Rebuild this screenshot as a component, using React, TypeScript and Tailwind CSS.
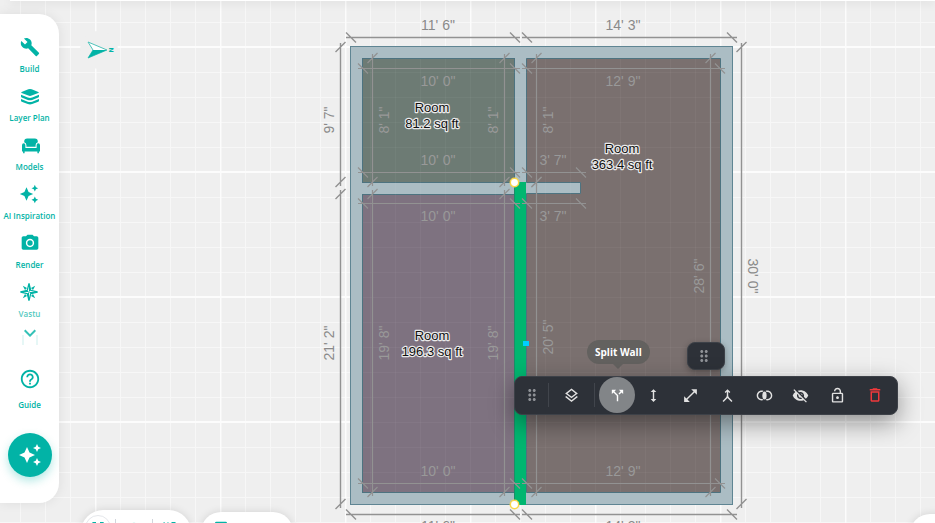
import React from 'react';
import type { IconType } from 'react-icons';
import {
  MdAutoAwesome,
  MdBuild,
  MdCallSplit,
  MdCropFree,
  MdDragIndicator,
  MdExpandMore,
  MdHeight,
  MdHelpOutline,
  MdJoinInner,
  MdMerge,
  MdOpenInFull,
  MdOutlineDelete,
  MdOutlineLayers,
  MdOutlineLock,
  MdOutlineLockOpen,
  MdPhotoCamera,
  MdSyncDisabled,
  MdVisibilityOff,
  MdWebAsset,
} from 'react-icons/md';

interface IconProps {
  className?: string;
}

const LayerPlanIcon: React.FC<IconProps> = ({ className }) => (
  <svg viewBox="0 -1 20 20" className={className} fill="currentColor" aria-hidden="true">
    <path d="M8.3 2.300 Q10 1.700 11.700 2.300 L18.300 4.900 Q19.500 5.500 18.300 6.100 L11.700 8.600 Q10 9.200 8.300 8.600 L1.700 6.100 Q.5 5.500 1.700 4.900 Z" />
    <path d="M1 7.800 L7.800 10.500 Q10 11.300 12.200 10.500 L19 7.800 V9.600 Q19 10.200 18.300 10.500 L12.200 12.900 Q10 13.700 7.800 12.900 L1.700 10.500 Q1 10.200 1 9.600 Z" />
    <path d="M1 12 L7.800 14.700 Q10 15.500 12.200 14.700 L19 12 V13.800 Q19 14.400 18.300 14.700 L12.200 17.100 Q10 17.900 7.800 17.100 L1.700 14.700 Q1 14.400 1 13.800 Z" />
  </svg>
);

const SofaIcon: React.FC<IconProps> = ({ className }) => (
  <svg viewBox="-1 -1 20 20" className={className} fill="currentColor" aria-hidden="true">
    <path d="M3.200 5.800 Q3.200 2.500 6.200 2.500 H13.800 Q16.800 2.500 16.800 5.800 V6.300 Q14.600 6.800 14.600 9 V10.800 H5.400 V9 Q5.400 6.800 3.200 6.300 Z" />
    <path d="M1 9.300 Q1 7.200 2.700 7.200 Q4.400 7.200 4.400 9.300 V11.900 H15.600 V9.300 Q15.600 7.200 17.300 7.200 Q19 7.200 19 9.300 V15.600 H17.900 V17.300 H16.400 V15.600 H3.600 V17.300 H2.100 V15.600 H1 Z" />
  </svg>
);

const CompassIcon: React.FC<IconProps> = ({ className }) => (
  <svg viewBox="0 0 20 20" className={className} aria-hidden="true">
    <path
      d="M10 1.500 L11.700 8.300 L18.500 10 L11.700 11.700 L10 18.500 L8.300 11.700 L1.500 10 L8.300 8.300 Z"
      fill="none"
      stroke="currentColor"
      strokeWidth="1.300"
    />
    <path d="M10 1 V10 L11.800 8.200 Z M10 19 V10 L8.200 11.800 Z M1 10 H10 L8.200 8.200 Z M19 10 H10 L11.800 11.800 Z" fill="currentColor" />
    <path d="M3.800 3.800 L8 6 L6 8 Z M16.200 3.800 L14 8 L12 6 Z M3.800 16.200 L6 12 L8 14 Z M16.200 16.200 L12 14 L14 12 Z" fill="currentColor" />
  </svg>
);

interface NavItem {
  label: string;
  Icon: IconType | React.FC<IconProps>;
  faded?: boolean;
}

const navItems: NavItem[] = [
  { label: 'Build', Icon: MdBuild },
  { label: 'Layer Plan', Icon: LayerPlanIcon },
  { label: 'Models', Icon: SofaIcon },
  { label: 'AI Inspiration', Icon: MdAutoAwesome },
  { label: 'Render', Icon: MdPhotoCamera },
  { label: 'Vastu', Icon: CompassIcon, faded: true },
];

const Sidebar = () => (
  <nav className="relative z-10 mt-3.5 mb-5 flex w-[59px] shrink-0 flex-col items-center rounded-r-[20px] bg-white pt-[23px] text-[#02b3a6] shadow-[0_0_12px_rgba(0,0,0,0.08)]">
    {navItems.map(({ label, Icon, faded }) => (
      <button key={label} type="button" className="flex h-[49px] shrink-0 flex-col items-center gap-1.5">
        <Icon className="size-5 shrink-0" />
        <span className={`text-[8px] leading-3 font-semibold whitespace-nowrap ${faded ? 'opacity-70' : ''}`}>{label}</span>
      </button>
    ))}
    <button type="button" aria-label="More tools" className="relative -mt-1 flex h-5 w-6 shrink-0 items-start justify-center">
      <span className="absolute top-2 h-2.5 w-4 border-x-2 border-[#e6f7f6]" />
      <MdExpandMore className="relative -mt-1.5 size-6 shrink-0 opacity-80" stroke="currentColor" />
    </button>
    <button type="button" className="mt-[21px] flex flex-col items-center gap-[9px]">
      <MdHelpOutline className="size-[22px]" />
      <span className="text-[8px] leading-3 font-semibold">Guide</span>
    </button>
    <button
      type="button"
      aria-label="AI assistant"
      className="mt-[22px] flex size-11 shrink-0 items-center justify-center rounded-full bg-[#02b3a6] text-white shadow-[0_4px_10px_rgba(2,179,166,0.3)]"
    >
      <MdAutoAwesome className="size-6" />
    </button>
  </nav>
);

interface Dim {
  at: number;
  from: number;
  to: number;
  outside?: boolean;
}

// dimension lines that run left to right: at = y
const acrossDims: Dim[] = [
  { at: 37, from: 350, to: 515, outside: true },
  { at: 37, from: 526, to: 732, outside: true },
  { at: 68, from: 362, to: 515 },
  { at: 68, from: 526, to: 720 },
  { at: 172, from: 362, to: 515 },
  { at: 172, from: 526, to: 581 },
  { at: 203, from: 362, to: 515 },
  { at: 203, from: 526, to: 581 },
  { at: 483, from: 362, to: 515 },
  { at: 483, from: 526, to: 720 },
  { at: 514, from: 350, to: 515, outside: true },
  { at: 514, from: 526, to: 732, outside: true },
];

// dimension lines that run top to bottom: at = x
const downDims: Dim[] = [
  { at: 340, from: 47, to: 182, outside: true },
  { at: 340, from: 194, to: 504, outside: true },
  { at: 372, from: 58, to: 182 },
  { at: 372, from: 194, to: 492 },
  { at: 504, from: 58, to: 182 },
  { at: 504, from: 194, to: 492 },
  { at: 536, from: 58, to: 182 },
  { at: 536, from: 182, to: 492 },
  { at: 710, from: 58, to: 492 },
  { at: 741, from: 47, to: 504, outside: true },
];

interface PlanLabel {
  x: number;
  y: number;
  text: string;
  turn?: number;
  outside?: boolean;
}

const planLabels: PlanLabel[] = [
  { x: 438, y: 25, text: '11\' 6"', outside: true },
  { x: 623, y: 25, text: '14\' 3"', outside: true },
  { x: 438, y: 526, text: '11\' 6"', outside: true },
  { x: 623, y: 526, text: '14\' 3"', outside: true },
  { x: 329, y: 120, text: '9\' 7"', turn: -90, outside: true },
  { x: 329, y: 343, text: '21\' 2"', turn: -90, outside: true },
  { x: 753, y: 276, text: '30\' 0"', turn: 90, outside: true },
  { x: 438, y: 81, text: '10\' 0"' },
  { x: 438, y: 160, text: '10\' 0"' },
  { x: 438, y: 216, text: '10\' 0"' },
  { x: 438, y: 471, text: '10\' 0"' },
  { x: 623, y: 81, text: '12\' 9"' },
  { x: 623, y: 471, text: '12\' 9"' },
  { x: 553, y: 160, text: '3\' 7"' },
  { x: 553, y: 216, text: '3\' 7"' },
  { x: 384, y: 120, text: '8\' 1"', turn: -90 },
  { x: 493, y: 120, text: '8\' 1"', turn: -90 },
  { x: 548, y: 120, text: '8\' 1"', turn: -90 },
  { x: 384, y: 343, text: '19\' 8"', turn: -90 },
  { x: 493, y: 343, text: '19\' 8"', turn: -90 },
  { x: 548, y: 337, text: '20\' 5"', turn: -90 },
  { x: 699, y: 276, text: '28\' 6"', turn: -90 },
];

const rooms = [
  { x: 432, y: 107, area: '81.2 sq ft' },
  { x: 622, y: 148, area: '363.4 sq ft' },
  { x: 432, y: 335, area: '196.3 sq ft' },
];

const FloorPlan = () => (
  <svg className="absolute inset-0 h-full w-full" fontFamily="'Liberation Sans', Arial, sans-serif" aria-label="Floor plan">
    <defs>
      <pattern id="minor" x="95" y="47" width="25" height="25" patternUnits="userSpaceOnUse">
        <path d="M.5 0 V25 M0 .5 H25" stroke="#f7f7f7" />
      </pattern>
      <pattern id="major" x="95" y="46" width="125" height="125" patternUnits="userSpaceOnUse">
        <path d="M.5 0 V125 M0 1 H125" stroke="#fcfcfc" strokeWidth="2" />
      </pattern>
    </defs>
    <rect width="100%" height="100%" fill="#efefef" />
    <rect width="100%" height="100%" fill="url(#minor)" />
    <rect width="100%" height="100%" fill="url(#major)" />

    {/* compass pointing north */}
    <circle cx="99" cy="50" r="19" fill="#efefef" />
    <path d="M88 42 L107 50 L88 58 L93 50 Z" fill="#ffffff" stroke="#4fc4bb" />
    <path d="M93 50 H107 L88 58 Z" fill="#02b3a6" />
    <text x="111" y="50" fontSize="6" fontWeight="700" fontFamily="'DejaVu Sans', sans-serif" fill="#02b3a6" textAnchor="middle" dominantBaseline="central" transform="rotate(90 111 50)">N</text>

    {/* walls and rooms */}
    <rect x="350.5" y="46.5" width="382" height="458" fill="#abbdc4" stroke="#5f8593" />
    <g stroke="#4d7380">
      <rect x="362.5" y="58.5" width="152" height="124" fill="#6d7b74" />
      <rect x="362.5" y="194.5" width="152" height="298" fill="#7e7280" />
      <path d="M526.5 58.500 H720.500 V492.500 H526.500 V193.500 H580.500 V182.500 H526.500 Z" fill="#7a706f" />
    </g>
    <path
      d="M370.500 59 V492 M395.500 59 V492 M420.500 59 V492 M445.500 59 V492 M470.500 59 V492 M495.500 59 V492 M545.500 59 V492 M570.500 59 V492 M595.500 59 V492 M620.500 59 V492 M645.500 59 V492 M670.500 59 V492 M695.500 59 V492 M363 72.500 H720 M363 97.500 H720 M363 122.500 H720 M363 147.500 H720 M363 222.500 H720 M363 247.500 H720 M363 272.500 H720 M363 297.500 H720 M363 322.500 H720 M363 347.500 H720 M363 372.500 H720 M363 397.500 H720 M363 422.500 H720 M363 447.500 H720 M363 472.500 H720"
      stroke="#ffffff"
      strokeOpacity="0.04"
    />
    {/* selected wall */}
    <rect x="514" y="182" width="12" height="323" fill="#00b670" />
    <path d="M514.500 182 V504" stroke="#1a8d68" />

    <g stroke="#929292" fill="none">
      {acrossDims.map(({ at, from, to, outside }) => (
        <path
          key={`${at}-${from}`}
          strokeWidth={outside ? 1.4 : 1.2}
          d={`M${from - 4} ${at + 0.5} H${to + 5} M${from - 4} ${at - 4.5} l10 10 M${to - 5} ${at - 4.5} l10 10`}
        />
      ))}
      {downDims.map(({ at, from, to, outside }) => (
        <path
          key={`${at}-${from}`}
          strokeWidth={outside ? 1.4 : 1.2}
          d={`M${at + 0.5} ${from - 4} V${to + 4} M${at - 4.5} ${from + 5} l10 -10 M${at - 4.5} ${to + 5} l10 -10`}
        />
      ))}
    </g>

    <g fontSize="14" textAnchor="middle">
      {planLabels.map(({ x, y, text, turn = 0, outside }) => (
        <text
          key={`${x}-${y}`}
          x={x}
          y={y}
          dominantBaseline="central"
          fill={outside ? '#8a8a8a' : '#999999'}
          transform={`rotate(${turn} ${x} ${y})`}
        >
          {text}
        </text>
      ))}
    </g>

    <g fontSize="13" textAnchor="middle" fill="#111111" stroke="#e9e9e9" strokeWidth="2.400" strokeLinejoin="round" paintOrder="stroke">
      {rooms.map(({ x, y, area }) => (
        <text key={area} x={x} y={y} dominantBaseline="central">
          <tspan x={x}>Room</tspan>
          <tspan x={x} dy="16">{area}</tspan>
        </text>
      ))}
    </g>

    <g fill="#ffffff" stroke="#f9d648" strokeWidth="1.500">
      <circle cx="514.500" cy="182.500" r="4.200" />
      <circle cx="514.500" cy="504.500" r="4.200" />
    </g>
    <rect x="523" y="341" width="6" height="5" fill="#00cfff" />
  </svg>
);

const wallActions = [
  { label: 'Resize height', Icon: MdHeight },
  { label: 'Stretch wall', Icon: MdOpenInFull },
  { label: 'Merge walls', Icon: MdMerge },
  { label: 'Join walls', Icon: MdJoinInner },
  { label: 'Hide wall', Icon: MdVisibilityOff },
  { label: 'Lock wall', Icon: MdOutlineLockOpen },
];

const WallToolbar = () => (
  <div
    role="toolbar"
    aria-label="Wall"
    className="absolute top-[376px] left-[514px] flex h-[39px] w-96 items-center rounded-lg border border-[#3d4148] bg-[#2d3138] pr-1 pb-px text-[#e2e2e2] shadow-[0_8px_24px_rgba(0,0,0,0.4)]"
  >
    <button type="button" aria-label="Move toolbar" className="flex h-6 w-[34px] items-center justify-center border-r border-[#41454c] text-[#8f9297]">
      <MdDragIndicator className="size-[18px]" />
    </button>
    <button type="button" aria-label="Wall layers" className="flex h-6 w-[46px] items-center justify-center border-r border-[#41454c]">
      <MdOutlineLayers className="size-[17px]" />
    </button>
    <button type="button" aria-label="Split Wall" className="ml-1 flex size-9 items-center justify-center rounded-full bg-[#828588] text-white">
      <MdCallSplit className="size-[17px]" />
    </button>
    <div className="flex flex-1">
      {wallActions.map(({ label, Icon }) => (
        <button key={label} type="button" aria-label={label} className="flex h-9 flex-1 items-center justify-center">
          <Icon className="size-[17px]" />
        </button>
      ))}
      <button type="button" aria-label="Delete wall" className="flex h-9 flex-1 items-center justify-center text-[#f0393b]">
        <MdOutlineDelete className="size-[18px]" />
      </button>
    </div>
  </div>
);

const App: React.FC = () => (
  <div className="relative flex h-screen overflow-hidden bg-[#efefef] font-['Open_Sans','Noto_Sans',sans-serif]">
    <FloorPlan />
    <header className="absolute top-0 right-0 left-2.5 h-px bg-white shadow-[0_1px_8px_rgba(0,0,0,0.35)]" />
    <Sidebar />

    <div role="tooltip" className="absolute top-[340px] left-[587px] rounded-full bg-[#63615f] px-2 py-1 text-[10px] leading-4 font-bold whitespace-nowrap text-white">
      Split Wall
      <svg viewBox="0 0 10 5" className="absolute top-full left-1/2 -ml-[5px] h-[5px] w-2.5" aria-hidden="true">
        <path d="M0 0 H10 L5 5 Z" fill="#63615f" />
      </svg>
    </div>
    <button
      type="button"
      aria-label="Move panel"
      className="absolute top-[342px] left-[687px] flex h-7 w-[38px] items-center justify-center rounded-lg border border-[#3d4148] bg-[#2d3138] pr-1 text-[#8f9297] shadow-[0_2px_6px_rgba(0,0,0,0.3)]"
    >
      <MdDragIndicator className="size-[18px]" />
    </button>
    <WallToolbar />

    {/* view controls, mostly below the fold */}
    <div className="absolute top-[calc(100%-13px)] left-[81px] flex h-12 w-[110px] items-start rounded-[22px] bg-white pt-[5px] pl-1 text-[#02b3a6] shadow-[0_0_8px_rgba(0,0,0,0.12)]">
      <button type="button" aria-label="Fit to view" className="flex size-[26px] items-center justify-center rounded-full border border-gray-200">
        <MdCropFree className="size-4" />
      </button>
      <button type="button" aria-label="Lock view" className="mt-1 ml-1 flex w-[38px] justify-center border-x border-gray-300 pt-[3px]">
        <MdOutlineLock className="size-4 opacity-40" />
      </button>
      <button type="button" aria-label="Rotation off" className="mt-1 ml-2">
        <MdSyncDisabled className="size-[18px]" />
      </button>
    </div>
    <button
      type="button"
      aria-label="Floor"
      className="absolute top-[calc(100%-11px)] left-[201px] flex h-12 w-[92px] items-start rounded-[20px] bg-white pt-[7px] pl-3 text-[#02b3a6] shadow-[0_0_8px_rgba(0,0,0,0.12)]"
    >
      <MdWebAsset className="size-4" />
    </button>
    <div className="absolute top-[calc(100%-9px)] -right-5 h-12 w-[45px] rounded-[20px] bg-white shadow-[0_0_8px_rgba(0,0,0,0.12)]" />
  </div>
);

export default App;
